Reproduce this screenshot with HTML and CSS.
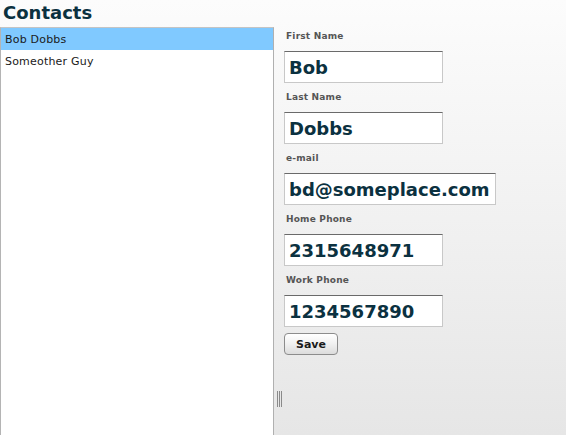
FILE: index.html
```html
<!DOCTYPE html>
<html>
<head>
<meta charset="utf-8">
<link rel="stylesheet" href="styles.css">
</head>
<body>
<div class="app">
  <h1 class="title">Contacts</h1>
  <div class="main">
    <ul class="list">
      <li class="item selected">Bob Dobbs</li>
      <li class="item">Someother Guy</li>
    </ul>
    <div class="splitter"><div class="grip"></div></div>
    <form class="form">
      <label class="label">First Name</label>
      <input class="field" type="text" value="Bob">
      <label class="label">Last Name</label>
      <input class="field" type="text" value="Dobbs">
      <label class="label">e-mail</label>
      <input class="field wide" type="text" value="bd@someplace.com">
      <label class="label">Home Phone</label>
      <input class="field" type="text" value="2315648971">
      <label class="label">Work Phone</label>
      <input class="field" type="text" value="1234567890">
      <button class="save" type="button">Save</button>
    </form>
  </div>
</div>
</body>
</html>
```
FILE: styles.css
```css
html, body {
  margin: 0;
  padding: 0;
  height: 100%;
}
body {
  background: linear-gradient(to bottom, #fcfcfc 0%, #e6e6e6 100%);
  font-family: "DejaVu Sans", Verdana, sans-serif;
  overflow: hidden;
}
.app {
  display: flex;
  flex-direction: column;
  height: 435px;
}
.title {
  margin: 0;
  height: 27px;
  box-sizing: border-box;
  padding: 2px 0 0 3px;
  font-size: 18px;
  line-height: 21px;
  font-weight: bold;
  color: #0b3140;
}
.main {
  flex: 1;
  display: flex;
  min-height: 0;
}
.list {
  list-style: none;
  margin: 0;
  padding: 0;
  width: 274px;
  box-sizing: border-box;
  background: #fff;
  border-top: 1px solid #c4c4c4;
  border-left: 1px solid #b4b4b4;
  border-right: 1px solid #b0b0b0;
}
.item {
  height: 22px;
  line-height: 23px;
  padding-left: 4px;
  font-size: 11px;
  letter-spacing: 0.2px;
  color: #1a1a1a;
}
.item.selected {
  background: #80c9ff;
}
.splitter {
  width: 10px;
  box-sizing: border-box;
  padding: 0 0 28px 3px;
  display: flex;
  flex-direction: column;
  justify-content: flex-end;
}
.grip {
  width: 5px;
  height: 16px;
  background: repeating-linear-gradient(to right, #8a8a8a 0, #8a8a8a 1px, transparent 1px, transparent 2px);
}
.form {
  display: flex;
  flex-direction: column;
  align-items: flex-start;
  padding-top: 3px;
}
.label {
  display: block;
  font-size: 9px;
  line-height: 12px;
  font-weight: bold;
  letter-spacing: 0.2px;
  color: #555;
  margin: 0 0 9px 2px;
}
.field {
  width: 159px;
  height: 32px;
  box-sizing: border-box;
  margin: 0 0 8px 0;
  padding: 0 0 0 4px;
  border: 1px solid #c8c8c8;
  border-top-color: #6a6a6a;
  background: #fff;
  font-family: "DejaVu Sans", Verdana, sans-serif;
  font-size: 18px;
  font-weight: bold;
  color: #0b3140;
  outline: none;
}
.field.wide {
  width: 212px;
}
.save {
  margin-top: -2px;
  width: 54px;
  height: 22px;
  border: 1px solid #8c8c8c;
  border-radius: 4px;
  background: linear-gradient(to bottom, #ffffff 0%, #f0f0f0 50%, #dcdcdc 100%);
  font-family: "DejaVu Sans", Verdana, sans-serif;
  font-size: 11px;
  font-weight: bold;
  color: #1a1a1a;
  padding: 0;
}
```
